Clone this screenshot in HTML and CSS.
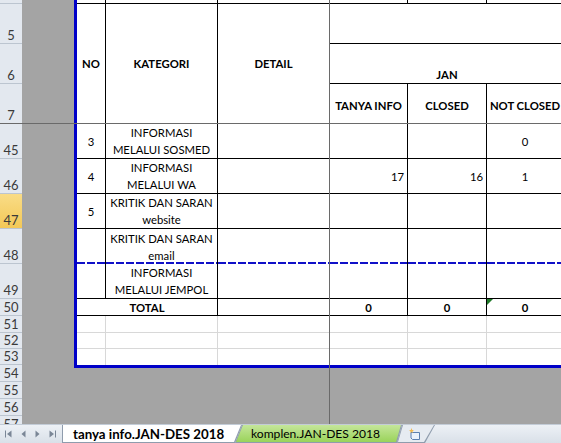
FILE: index.html
```html
<!DOCTYPE html>
<html>
<head>
<meta charset="utf-8">
<link rel="stylesheet" href="styles.css">
</head>
<body>
<div class="app">
  <div class="sheet">
    <div class="rowheads">
      <div class="rh r4"></div>
      <div class="rh r40">5</div>
      <div class="rh r40">6</div>
      <div class="rh r40">7</div>
      <div class="rh r35">45</div>
      <div class="rh r35">46</div>
      <div class="rh r35 sel">47</div>
      <div class="rh r35">48</div>
      <div class="rh r35">49</div>
      <div class="rh r17">50</div>
      <div class="rh r17">51</div>
      <div class="rh r16">52</div>
      <div class="rh r16">53</div>
      <div class="rh r17">54</div>
      <div class="rh r17">55</div>
      <div class="rh r17">56</div>
      <div class="rh r17">57</div>
    </div>
    <div class="canvas">
      <div class="page">
        <div class="grid">
          <!-- row 4 tail -->
          <div class="c"></div><div class="c"></div><div class="c"></div><div class="c"></div><div class="c"></div><div class="c"></div>
          <!-- header rows 5-7 -->
          <div class="c b tall">NO</div>
          <div class="c b tall">KATEGORI</div>
          <div class="c b tall">DETAIL</div>
          <div class="c wide nr"></div>
          <div class="c b wide nr bottom">JAN</div>
          <div class="c b sub">TANYA INFO</div>
          <div class="c b sub">CLOSED</div>
          <div class="c b sub">NOT CLOSED</div>
          <!-- 45 -->
          <div class="c">3</div>
          <div class="c">INFORMASI<br>MELALUI SOSMED</div>
          <div class="c"></div><div class="c"></div><div class="c"></div>
          <div class="c">0</div>
          <!-- 46 -->
          <div class="c">4</div>
          <div class="c">INFORMASI<br>MELALUI WA</div>
          <div class="c"></div>
          <div class="c num">17</div>
          <div class="c num">16</div>
          <div class="c">1</div>
          <!-- 47 -->
          <div class="c">5</div>
          <div class="c">KRITIK DAN SARAN<br>website</div>
          <div class="c"></div><div class="c"></div><div class="c"></div><div class="c"></div>
          <!-- 48 -->
          <div class="c pb"></div>
          <div class="c pb">KRITIK DAN SARAN<br>email</div>
          <div class="c pb"></div><div class="c pb"></div><div class="c pb"></div><div class="c pb"></div>
          <!-- 49 -->
          <div class="c"></div>
          <div class="c">INFORMASI<br>MELALUI JEMPOL</div>
          <div class="c"></div><div class="c"></div><div class="c"></div><div class="c"></div>
          <!-- 50 -->
          <div class="c b span2">TOTAL</div>
          <div class="c"></div>
          <div class="c b">0</div>
          <div class="c b">0</div>
          <div class="c b tri">0</div>
          <!-- 51-53 -->
          <div class="g"></div><div class="g"></div><div class="g"></div><div class="g"></div><div class="g"></div><div class="g"></div>
          <div class="g"></div><div class="g"></div><div class="g"></div><div class="g"></div><div class="g"></div><div class="g"></div>
          <div class="g last"></div><div class="g last"></div><div class="g last"></div><div class="g last"></div><div class="g last"></div><div class="g last"></div>
        </div>
      </div>
    </div>
    <div class="freeze-v"></div>
    <div class="freeze-h"></div>
  </div>
  <div class="tabbar">
    <div class="nav">
      <svg width="7" height="8" viewBox="0 0 7 8"><rect x="0" y="0.5" width="1" height="7" fill="#7a8696"/><path d="M6.5 0.5 L2 4 L6.5 7.5Z" fill="#7a8696"/></svg>
      <svg width="5" height="8" viewBox="0 0 5 8"><path d="M4.5 0.5 L0.5 4 L4.5 7.5Z" fill="#7a8696"/></svg>
      <svg width="5" height="8" viewBox="0 0 5 8"><path d="M0.5 0.5 L4.5 4 L0.5 7.5Z" fill="#7a8696"/></svg>
      <svg width="7" height="8" viewBox="0 0 7 8"><path d="M0.5 0.5 L5 4 L0.5 7.5Z" fill="#7a8696"/><rect x="6" y="0.5" width="1" height="7" fill="#7a8696"/></svg>
    </div>
    <div class="tabs">
      <div class="tab active"><div class="tab-in">tanya info.JAN-DES 2018</div></div>
      <div class="tab green"><div class="tab-in">komplen.JAN-DES 2018</div></div>
      <div class="tab new"><div class="tab-in">
        <svg width="14" height="12" viewBox="0 0 14 12"><path d="M4 4.5 H12.5 V11.5 H5.5 L4 10 Z" fill="#eaf1fb" stroke="#5b7fb0" stroke-width="1"/><path d="M4.5 0 L5.2 2 L7 2.2 L5.5 3.3 L6 5 L4.5 4 L3 5 L3.5 3.3 L2 2.2 L3.8 2 Z" fill="#f2b84b"/></svg>
      </div></div>
    </div>
  </div>
</div>
</body>
</html>
```

FILE: styles.css
```css
* { box-sizing: border-box; }
html, body { margin: 0; padding: 0; }
body {
  width: 561px;
  height: 443px;
  overflow: hidden;
  font-family: "Lato", "Liberation Sans", sans-serif;
  font-size: 11.3px;
  color: #000;
}
.app { display: flex; flex-direction: column; width: 561px; height: 443px; }
.sheet {
  position: relative;
  height: 424px;
  display: flex;
  background: #a4a4a4;
  overflow: hidden;
}
.rowheads {
  width: 22px;
  flex: none;
  display: flex;
  flex-direction: column;
  background: #e3e8ef;
}
.rh {
  flex: none;
  display: flex;
  align-items: flex-end;
  justify-content: center;
  border-bottom: 1px solid #bcc5d0;
  color: #3a3a3a;
  font-size: 13px;
  line-height: 15px;
}
.r4 { height: 4px; }
.r40 { height: 40px; }
.r35 { height: 35px; }
.r17 { height: 17px; }
.r16 { height: 16px; }
.rh.sel { background: linear-gradient(#f9dc86, #f3c857); }
.canvas { flex: 1; padding-left: 52px; min-width: 0; }
.page {
  width: 520px;
  border-left: 3px solid #0000c8;
  border-bottom: 3px solid #0000c8;
  background: #fff;
}
.grid {
  display: grid;
  grid-template-columns: 29px 112px 112px 78px 79px 77px;
  grid-template-rows: 4px 40px 40px 40px 35px 35px 35px 35px 35px 17px 17px 16px 16px;
}
.c {
  position: relative;
  border-right: 1px solid #000;
  border-bottom: 1px solid #000;
  display: flex;
  align-items: center;
  justify-content: center;
  text-align: center;
  line-height: 17px;
  white-space: nowrap;
}
.b { font-weight: bold; }
.tall { grid-row: span 3; }
.wide { grid-column: span 3; }
.span2 { grid-column: span 2; }
.nr { border-right: none; }
.bottom { align-items: flex-end; }
.sub { padding-top: 3px; }
.num { justify-content: flex-end; padding-right: 3px; }
.pb {
  border-bottom: none;
  background-image: repeating-linear-gradient(90deg, #1010c8 0 8px, #ffffff 8px 10px);
  background-size: 100% 2px;
  background-position: 0 100%;
  background-repeat: no-repeat;
}
.tri::before {
  content: "";
  position: absolute;
  left: 0;
  top: 0;
  border-top: 6px solid #217a2a;
  border-right: 6px solid transparent;
}
.g {
  border-right: 1px solid #d8d8d8;
  border-bottom: 1px solid #d8d8d8;
}
.g.last { border-bottom: none; }
.freeze-v {
  position: absolute;
  left: 329px;
  top: 0;
  bottom: 0;
  width: 1px;
  background: #6a6a6a;
}
.freeze-h {
  position: absolute;
  left: 0;
  right: 0;
  top: 123px;
  height: 1px;
  background: #6a6a6a;
}
.tabbar {
  height: 19px;
  display: flex;
  background: linear-gradient(#edf1f6, #d9e0e8);
  border-top: 1px solid #c3ccd7;
}
.nav {
  width: 62px;
  flex: none;
  display: flex;
  align-items: center;
  gap: 9px;
  padding-left: 5px;
  height: 18px;
}
.tabs { display: flex; align-items: flex-start; }
.tab {
  height: 18px;
  background: #8f9cad;
  padding: 0 1px 1px 1px;
}
.tab-in {
  height: 100%;
  display: flex;
  align-items: center;
  line-height: 16px;
  white-space: nowrap;
}
.active {
  width: 180px;
  clip-path: polygon(0 0, 180px 0, 173px 100%, 0 100%);
  position: relative;
  z-index: 2;
}
.active .tab-in {
  background: #fff;
  font-weight: bold;
  font-size: 13.3px;
  padding-left: 10px;
  clip-path: polygon(0 0, 178px 0, 171px 100%, 0 100%);
}
.green {
  width: 167px;
  margin-left: -7px;
  clip-path: polygon(7px 0, 167px 0, 162px 100%, 0 100%);
  position: relative;
  z-index: 1;
}
.green .tab-in {
  background: linear-gradient(#c4e69a, #9ad35a);
  font-size: 12.1px;
  padding-left: 15px;
  clip-path: polygon(7px 0, 165px 0, 160px 100%, 0 100%);
}
.new {
  width: 38px;
  margin-left: -5px;
  clip-path: polygon(5px 0, 38px 0, 28px 100%, 0 100%);
}
.new .tab-in {
  background: #e6ebf1;
  padding-left: 9px;
  clip-path: polygon(5px 0, 36px 0, 26px 100%, 0 100%);
}
```
